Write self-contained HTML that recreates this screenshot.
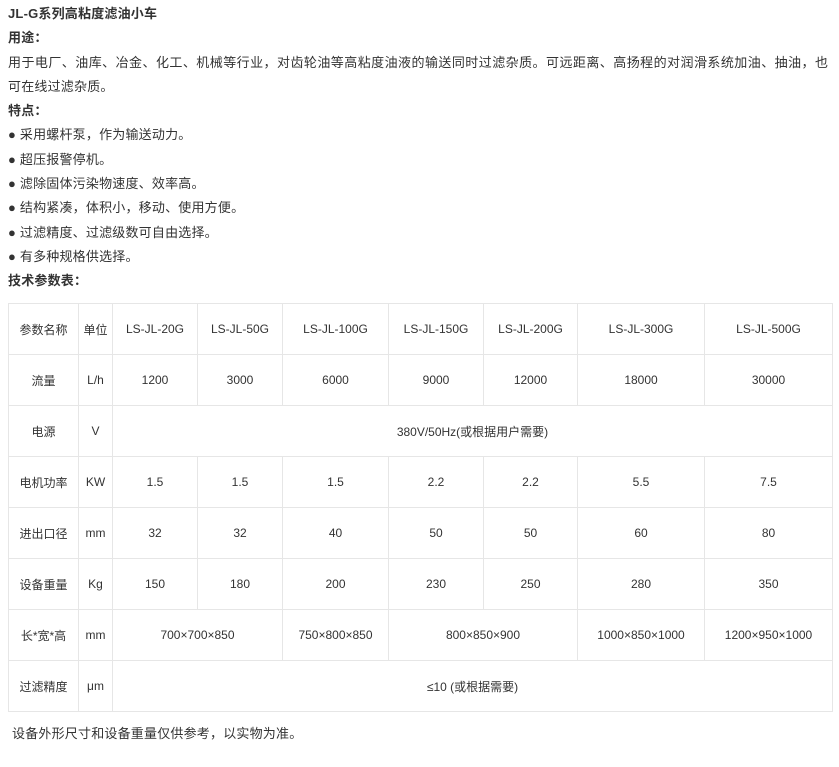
<!DOCTYPE html>
<html><head><meta charset="utf-8"><style>
body{margin:0;background:#fff;color:#333;font-family:"Liberation Sans","Noto Sans CJK SC",sans-serif;font-size:13px;}
.t{position:absolute;left:8px;top:2px;width:830px;line-height:24.3px;letter-spacing:0.2px}
.t p{margin:0}
b{font-weight:bold}
table{position:absolute;left:8px;top:303px;border-collapse:collapse;table-layout:fixed;font-size:12px;}
td{border:1.5px solid #e6e6e6;height:50px;text-align:center;padding:0;color:#333}
.f{position:absolute;left:12px;top:723px;font-size:13px;letter-spacing:0.2px}
</style></head><body>
<div class="t">
<p><b>JL-G系列高粘度滤油小车</b></p>
<p><b>用途：</b></p>
<p><span style="white-space:nowrap;letter-spacing:0.45px">用于电厂、油库、冶金、化工、机械等行业，对齿轮油等高粘度油液的输送同时过滤杂质。可远距离、高扬程的对润滑系统加油、抽油，也</span><br>可在线过滤杂质。</p>
<p><b>特点：</b></p>
<p>● 采用螺杆泵，作为输送动力。</p>
<p>● 超压报警停机。</p>
<p>● 滤除固体污染物速度、效率高。</p>
<p>● 结构紧凑，体积小，移动、使用方便。</p>
<p>● 过滤精度、过滤级数可自由选择。</p>
<p>● 有多种规格供选择。</p>
<p><b>技术参数表：</b></p>
</div>
<table>
<colgroup><col style="width:70px"><col style="width:34px"><col style="width:85px"><col style="width:85px"><col style="width:106px"><col style="width:95px"><col style="width:94px"><col style="width:127px"><col style="width:128px"></colgroup>
<tr><td>参数名称</td><td>单位</td><td>LS-JL-20G</td><td>LS-JL-50G</td><td>LS-JL-100G</td><td>LS-JL-150G</td><td>LS-JL-200G</td><td>LS-JL-300G</td><td>LS-JL-500G</td></tr>
<tr><td>流量</td><td>L/h</td><td>1200</td><td>3000</td><td>6000</td><td>9000</td><td>12000</td><td>18000</td><td>30000</td></tr>
<tr><td>电源</td><td>V</td><td colspan="7">380V/50Hz(或根据用户需要)</td></tr>
<tr><td>电机功率</td><td>KW</td><td>1.5</td><td>1.5</td><td>1.5</td><td>2.2</td><td>2.2</td><td>5.5</td><td>7.5</td></tr>
<tr><td>进出口径</td><td>mm</td><td>32</td><td>32</td><td>40</td><td>50</td><td>50</td><td>60</td><td>80</td></tr>
<tr><td>设备重量</td><td>Kg</td><td>150</td><td>180</td><td>200</td><td>230</td><td>250</td><td>280</td><td>350</td></tr>
<tr><td>长*宽*高</td><td>mm</td><td colspan="2">700×700×850</td><td>750×800×850</td><td colspan="2">800×850×900</td><td>1000×850×1000</td><td>1200×950×1000</td></tr>
<tr><td>过滤精度</td><td>μm</td><td colspan="7">≤10 (或根据需要)</td></tr>
</table>
<div class="f">设备外形尺寸和设备重量仅供参考，以实物为准。</div>
</body></html>
